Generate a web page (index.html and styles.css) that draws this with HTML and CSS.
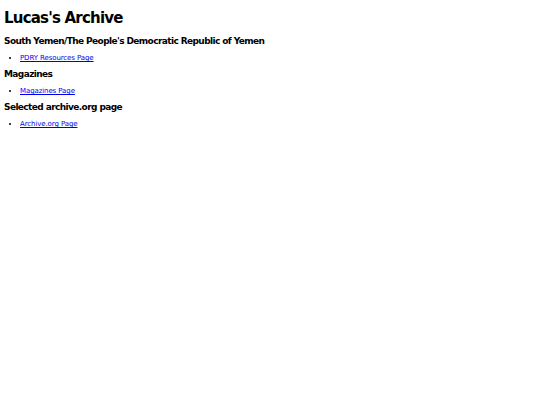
FILE: index.html
```html
<!DOCTYPE html>
<html>
<head>
<meta charset="utf-8">
<title>Lucas's Archive</title>
<link rel="stylesheet" href="styles.css">
</head>
<body>
<h1 class="title">Lucas's Archive</h1>
<h3 class="section">South Yemen/The People's Democratic Republic of Yemen</h3>
<ul class="links">
<li><a href="#">PDRY Resources Page</a></li>
</ul>
<h3 class="section">Magazines</h3>
<ul class="links">
<li><a href="#">Magazines Page</a></li>
</ul>
<h3 class="section">Selected archive.org page</h3>
<ul class="links">
<li><a href="#">Archive.org Page</a></li>
</ul>
</body>
</html>
```

FILE: styles.css
```css
html, body {
  background: #ffffff;
}
body {
  margin: 4px;
  font-family: "DejaVu Sans", Verdana, sans-serif;
  color: #000000;
}
.title {
  font-size: 15px;
  line-height: 20px;
  letter-spacing: -0.8px;
  margin: 4px 0 7px;
  font-weight: bold;
}
.section {
  font-size: 9px;
  line-height: 12px;
  letter-spacing: -0.6px;
  margin: 5px 0 6px;
  font-weight: bold;
}
.links {
  margin: 6px 0 5px;
  padding-left: 16px;
  font-size: 7px;
  line-height: 10px;
  letter-spacing: -0.1px;
}
.links a {
  color: #0000ee;
}
```
